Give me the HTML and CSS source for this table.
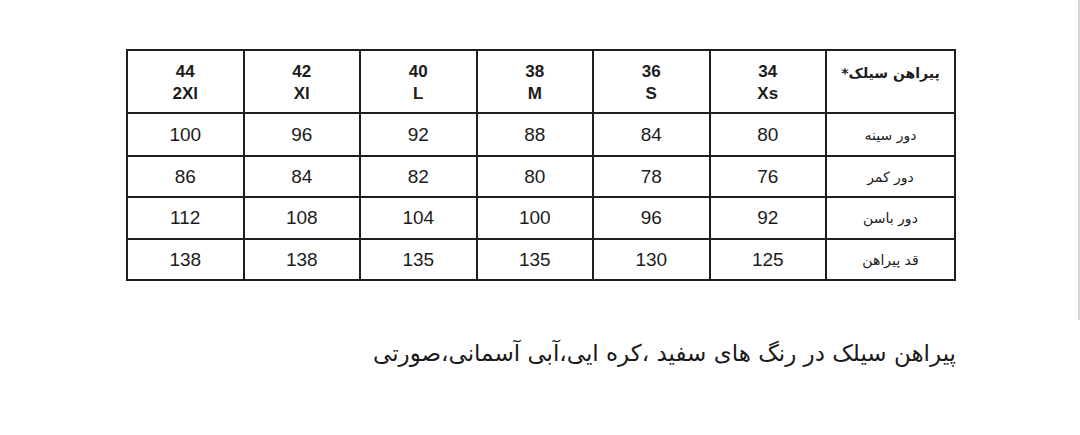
FILE: index.html
```html
<!DOCTYPE html>
<html lang="fa">
<head>
<meta charset="utf-8">
<link rel="stylesheet" href="styles.css">
</head>
<body>
<div class="page">
  <table class="sizes">
    <colgroup>
      <col class="c"><col class="c"><col class="c"><col class="c"><col class="c"><col class="c"><col class="cl">
    </colgroup>
    <tr class="head">
      <td>44<br>2Xl</td>
      <td>42<br>Xl</td>
      <td>40<br>L</td>
      <td>38<br>M</td>
      <td>36<br>S</td>
      <td>34<br>Xs</td>
      <td class="label">پیراهن سیلک*</td>
    </tr>
    <tr class="r1">
      <td>100</td><td>96</td><td>92</td><td>88</td><td>84</td><td>80</td>
      <td class="label">دور سینه</td>
    </tr>
    <tr class="r2">
      <td>86</td><td>84</td><td>82</td><td>80</td><td>78</td><td>76</td>
      <td class="label">دور کمر</td>
    </tr>
    <tr class="r3">
      <td>112</td><td>108</td><td>104</td><td>100</td><td>96</td><td>92</td>
      <td class="label">دور باسن</td>
    </tr>
    <tr class="r4">
      <td>138</td><td>138</td><td>135</td><td>135</td><td>130</td><td>125</td>
      <td class="label">قد پیراهن</td>
    </tr>
  </table>
  <p class="note">پیراهن سیلک در رنگ های سفید ،کره ایی،آبی آسمانی،صورتی</p>
</div>
<div class="edge"></div>
</body>
</html>
```
FILE: styles.css
```css
html, body {
  margin: 0;
  padding: 0;
  background: #ffffff;
}
body {
  width: 1080px;
  height: 435px;
  overflow: hidden;
  position: relative;
}
.page {
  padding-top: 49px;
  padding-left: 126px;
}
.sizes {
  border-collapse: collapse;
  width: 828px;
  table-layout: fixed;
  font-family: "Liberation Sans", Arial, sans-serif;
  color: #1c1c1c;
}
.sizes col.c { width: 116.5px; }
.sizes col.cl { width: 129px; }
.sizes td {
  border: 2px solid #1e1e1e;
  text-align: center;
  font-size: 19px;
  padding: 0;
  line-height: 22px;
  overflow: hidden;
}
.sizes td.label {
  font-family: "DejaVu Sans", sans-serif;
  font-size: 14px;
  direction: rtl;
}
.head td {
  height: 59px;
  font-weight: bold;
  font-size: 17px;
  line-height: 22px;
  vertical-align: middle;
  padding-top: 2px;
}
.head td.label {
  vertical-align: top;
  font-weight: bold;
  padding-top: 11px;
  height: 50px;
}
.r1 td { height: 41px; }
.r2 td { height: 39px; }
.r3 td { height: 40px; }
.r4 td { height: 39px; }
.note {
  margin: 58px 0 0 0;
  width: 830px;
  direction: rtl;
  text-align: right;
  font-family: "DejaVu Sans", sans-serif;
  font-size: 23px;
  line-height: 28px;
  color: #1a1a1a;
}
.edge {
  position: absolute;
  left: 1078px;
  top: 0;
  width: 2px;
  height: 320px;
  background: #d4d4d4;
}
```
